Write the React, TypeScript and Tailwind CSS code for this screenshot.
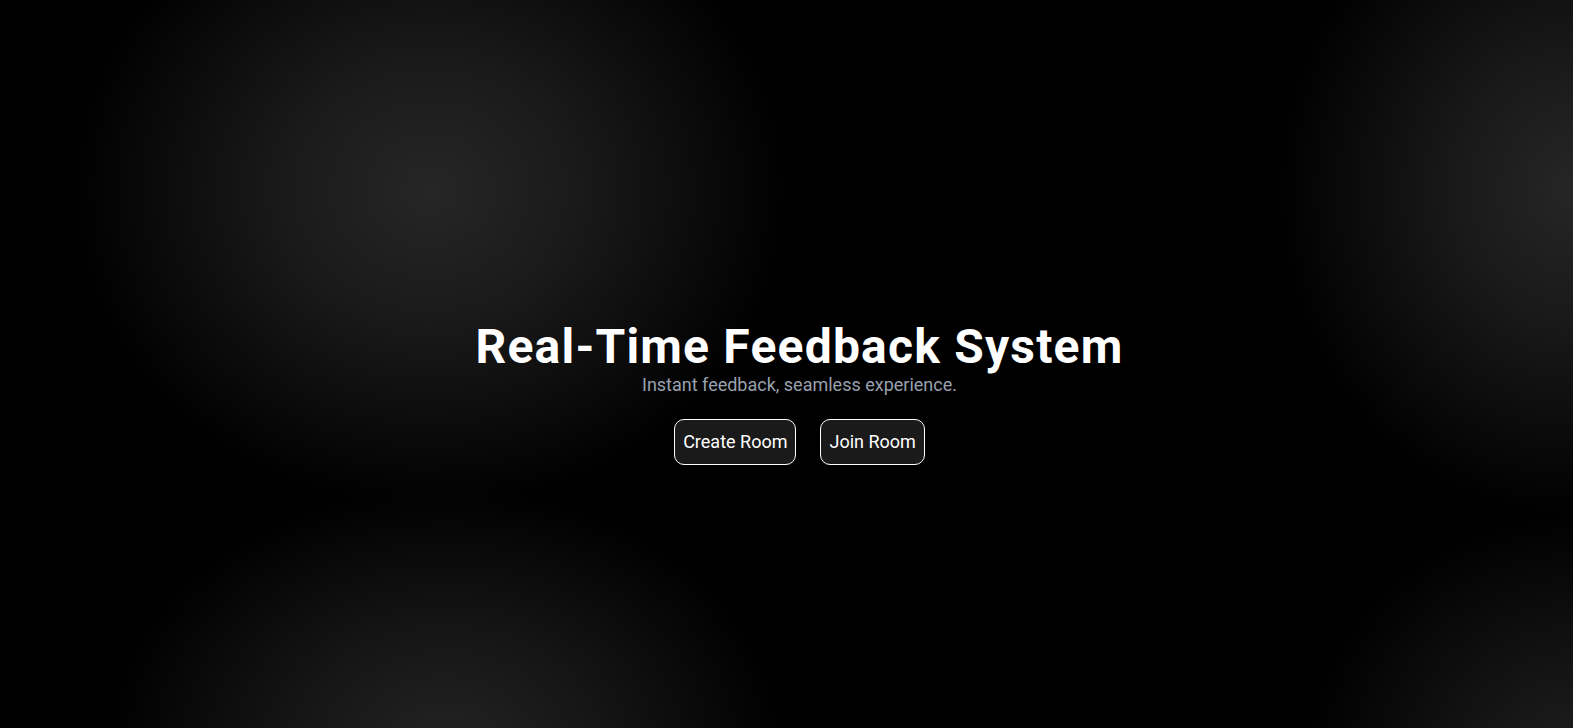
export default function App() {
  return (
    <div className="min-h-screen w-full bg-black bg-[image:radial-gradient(360px_320px_at_430px_190px,#262626,#1a1a1a_40%,transparent),radial-gradient(300px_330px_at_1575px_190px,#262626,#191919_40%,transparent),radial-gradient(340px_260px_at_445px_745px,#232323,#151515_45%,transparent),radial-gradient(280px_260px_at_1580px_770px,#202020,#121212_45%,transparent)] font-['Roboto',sans-serif]">
      <main className="min-h-screen flex flex-col items-center justify-center pl-[26px] pt-[59px]">
        <h1 className="text-5xl leading-none font-bold text-white tracking-wide">Real-Time Feedback System</h1>
        <p className="mt-0.5 text-lg leading-6 text-gray-400">Instant feedback, seamless experience.</p>
        <div className="mt-[22px] flex items-center gap-6">
          <button className="p-2 text-lg text-white bg-[#1a1a1a] border border-white rounded-[10px]">
            Create Room
          </button>
          <button className="p-2 text-lg text-white bg-[#1a1a1a] border border-white rounded-[10px]">
            Join Room
          </button>
        </div>
      </main>
    </div>
  );
}
